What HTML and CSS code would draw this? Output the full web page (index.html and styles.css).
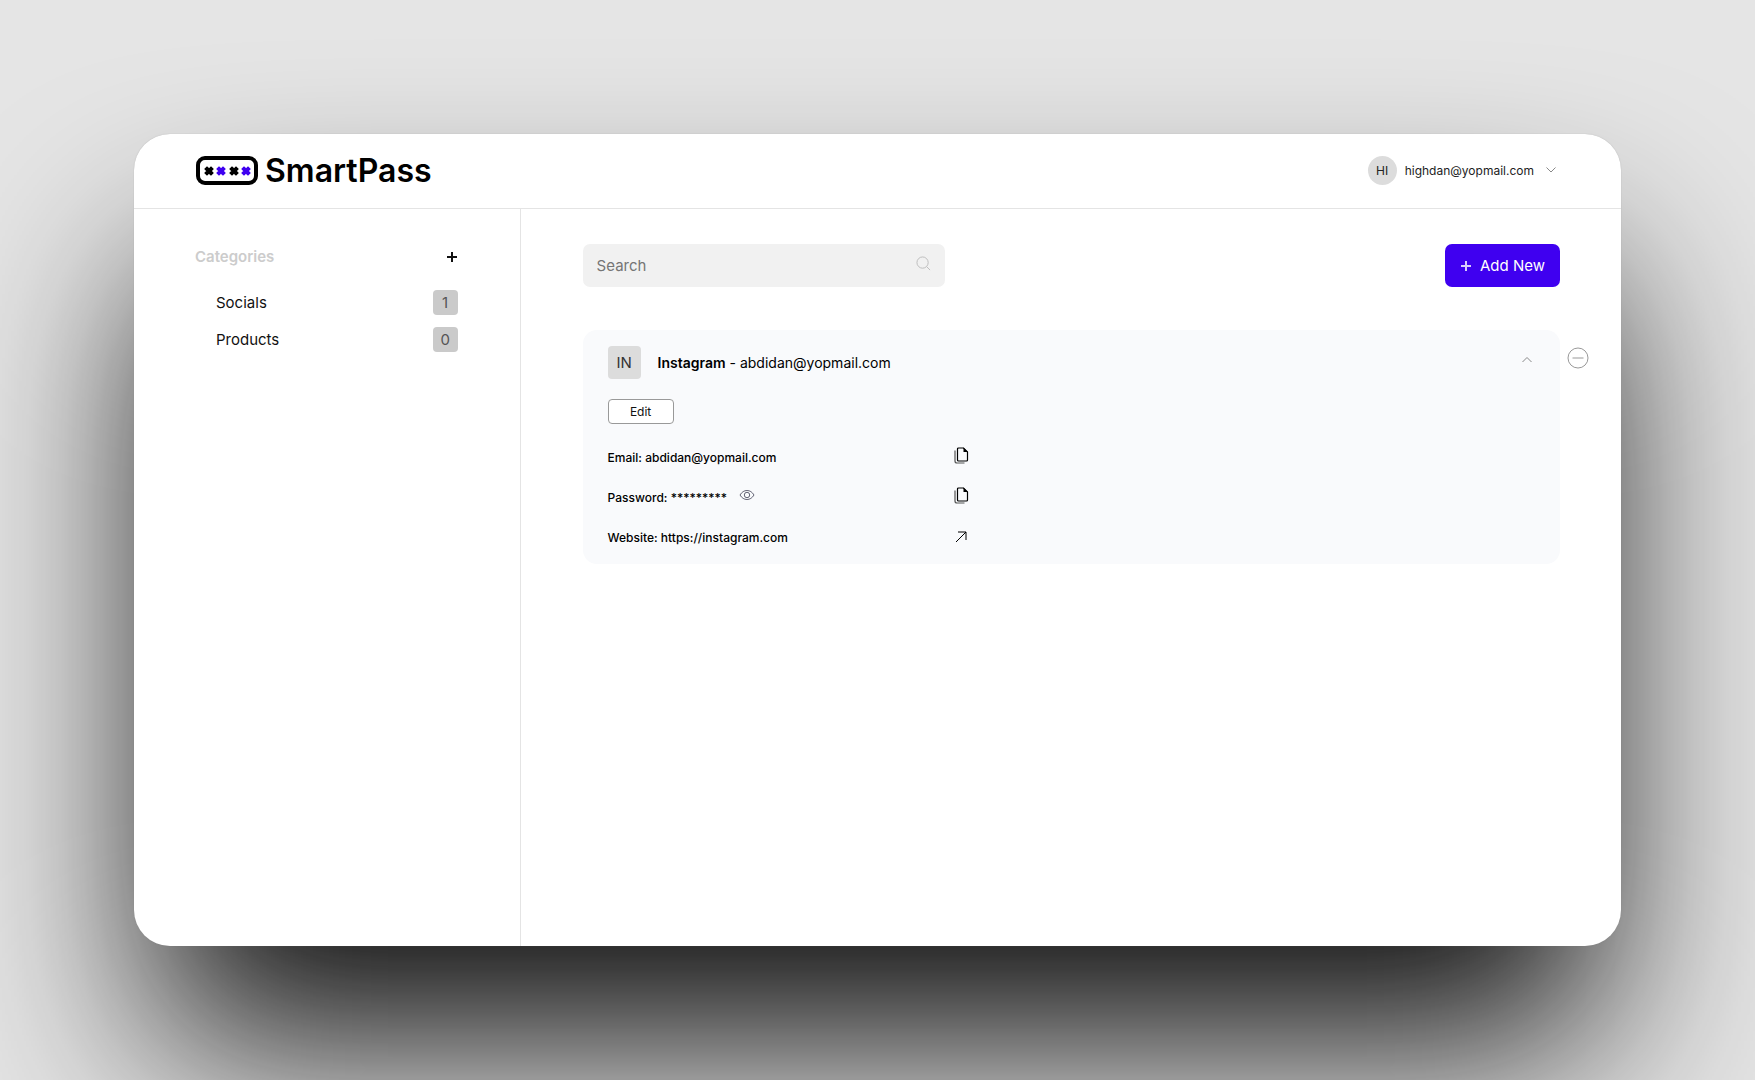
FILE: index.html
```
<!DOCTYPE html>
<html lang="en">
<head>
  <meta charset="UTF-8" />
  <meta name="viewport" content="width=device-width, initial-scale=1.0"/>
  <title>SmartPass</title>
  <link rel="stylesheet" href="styles.css">
</head>
<body>

  <!-- icons used more than once -->
  <svg class="sprite" aria-hidden="true">
    <symbol id="cross" viewBox="0 0 10 10">
      <path d="M3 3L7 7M7 3L3 7" fill="none" stroke="currentColor" stroke-width="4" stroke-linecap="square"/>
    </symbol>
    <symbol id="copy" viewBox="0 0 15 17">
      <path d="M4.500 1h5L13.500 5v8a1 1 0 0 1-1 1h-8a1 1 0 0 1-1-1V2a1 1 0 0 1 1-1z" fill="none" stroke="currentColor" stroke-width="1.200"/>
      <path d="M9.500 .5L14 5H9.500z" fill="currentColor" stroke="none"/>
      <path d="M1 3.500V14a2 2 0 0 0 2 2h7.500" fill="none" stroke="#555" stroke-width="1.200"/>
    </symbol>
  </svg>

  <div class="app">
    <header class="header">
      <a href="#" class="logo" aria-label="SmartPass">
        <svg class="logo-mark" viewBox="0 0 62 30" aria-hidden="true">
          <rect x="2" y="2" width="58" height="25" rx="7" fill="none" stroke="#000" stroke-width="4"/>
          <use href="#cross" x="8" y="10" width="10" height="10" color="#000"/>
          <use href="#cross" x="20" y="10" width="10" height="10" color="#3f00f0"/>
          <use href="#cross" x="33" y="10" width="10" height="10" color="#000"/>
          <use href="#cross" x="45" y="10" width="10" height="10" color="#3f00f0"/>
        </svg>
        <span class="logo-text">SmartPass</span>
      </a>
      <button class="user">
        <span class="avatar">HI</span>
        <span>highdan@yopmail.com</span>
        <svg class="chevron" viewBox="0 0 12 8" aria-hidden="true"><path d="M1.500 1.500L6 6l4.500-4.500"/></svg>
      </button>
    </header>

    <div class="body">
      <aside class="sidebar">
        <div class="sidebar-head">
          <h2>Categories</h2>
          <button class="icon-btn" aria-label="Add category">
            <svg class="plus" viewBox="0 0 12 12" aria-hidden="true"><path d="M6 1v10M1 6h10"/></svg>
          </button>
        </div>
        <ul class="categories">
          <li><a href="#">Socials <span class="count">1</span></a></li>
          <li><a href="#">Products <span class="count">0</span></a></li>
        </ul>
      </aside>

      <main class="main">
        <div class="toolbar">
          <label class="search">
            <input type="text" placeholder="Search" aria-label="Search">
            <svg class="search-icon" viewBox="0 0 16 16" aria-hidden="true"><circle cx="7" cy="7" r="6"/><path d="M11.500 11.500L15 15"/></svg>
          </label>
          <button class="add-btn">
            <svg class="plus" viewBox="0 0 12 12" aria-hidden="true"><path d="M6 1v10M1 6h10"/></svg>
            Add New
          </button>
        </div>

        <div class="entry">
          <section class="card">
            <div class="card-head">
              <span class="tile">IN</span>
              <p><strong>Instagram</strong> - abdidan@yopmail.com</p>
              <button class="icon-btn collapse" aria-label="Collapse">
                <svg class="chevron" viewBox="0 0 12 8" aria-hidden="true"><path d="M1.500 6L6 1.500 10.500 6"/></svg>
              </button>
            </div>
            <button class="edit-btn">Edit</button>
            <div class="fields">
              <div class="field">
                <span>Email: abdidan@yopmail.com</span>
                <button class="icon-btn" aria-label="Copy email"><svg class="copy"><use href="#copy"/></svg></button>
              </div>
              <div class="field">
                <span>Password: *********</span>
                <button class="icon-btn show" aria-label="Show password">
                  <svg class="eye" viewBox="0 0 16 12" aria-hidden="true"><path d="M1 6c1.800-3 4.200-4.500 7-4.500S13.200 3 15 6c-1.800 3-4.200 4.500-7 4.500S2.800 9 1 6z"/><circle cx="8" cy="6" r="2.700"/></svg>
                </button>
                <button class="icon-btn" aria-label="Copy password"><svg class="copy"><use href="#copy"/></svg></button>
              </div>
              <div class="field">
                <span>Website: https://instagram.com</span>
                <a class="icon-btn" href="https://instagram.com" aria-label="Open website">
                  <svg class="arrow" viewBox="0 0 12 12" aria-hidden="true"><path d="M1 11L11 1M3 1h8v8"/></svg>
                </a>
              </div>
            </div>
          </section>
          <button class="icon-btn remove" aria-label="Remove">
            <svg viewBox="0 0 22 22" aria-hidden="true"><circle cx="11" cy="11" r="10"/><path d="M5.500 11h11"/></svg>
          </button>
        </div>
      </main>
    </div>
  </div>

</body>
</html>
```
FILE: styles.css
```
* {
  box-sizing: border-box;
}
body {
  margin: 0;
  height: 100vh;
  padding: 134px;
  display: flex;
  background: #e5e5e5;
  font-family: Inter, "Liberation Sans", sans-serif;
  font-size: 15px;
  color: #111;
  overflow: hidden;
}
button, input {
  font: inherit;
  color: inherit;
}
button {
  cursor: pointer;
}
a {
  color: inherit;
  text-decoration: none;
}
svg {
  display: block;
  fill: none;
  stroke: currentColor;
}
.sprite {
  position: absolute;
  width: 0;
  height: 0;
}
.app {
  flex: 1;
  display: flex;
  flex-direction: column;
  overflow: hidden;
  background: #fff;
  border-radius: 36px;
  box-shadow: 0 0 1px rgba(128, 128, 128, 0.6), 0 118px 196px -22px rgba(0, 0, 0, 0.95);
}
.header {
  display: flex;
  justify-content: space-between;
  align-items: center;
  height: 75px;
  padding: 0 62px;
  border-bottom: 1px solid #e4e4e4;
}
.logo {
  display: flex;
  align-items: center;
  gap: 7px;
}
.logo-mark {
  width: 62px;
  height: 30px;
  stroke: none;
}
.logo-text {
  font-size: 32px;
  font-weight: 600;
  line-height: 40px;
  color: #000;
}
.user {
  display: flex;
  align-items: center;
  gap: 8px;
  padding: 0 0 2px;
  border: 0;
  background: none;
  font-size: 12px;
  color: #222;
}
.user .chevron {
  margin: 0 2px 0 3px;
}
.avatar {
  display: grid;
  place-items: center;
  width: 29px;
  height: 29px;
  border-radius: 50%;
  background: #dcdcdc;
}
.chevron {
  width: 12px;
  height: 8px;
  color: #888;
}
.body {
  flex: 1;
  display: flex;
}
.sidebar {
  width: 26%;
  padding: 36px 62px 0 61px;
  border-right: 1px solid #e4e4e4;
}
.sidebar-head {
  display: flex;
  justify-content: space-between;
  align-items: center;
}
.sidebar h2 {
  margin: 0;
  font-size: 15px;
  font-weight: 600;
  line-height: 24px;
  color: #ccc;
}
.icon-btn {
  display: grid;
  place-items: center;
  padding: 0;
  border: 0;
  background: none;
}
.plus {
  width: 12px;
  height: 12px;
  stroke-width: 2;
}
.categories {
  list-style: none;
  margin: 21px 0 0;
  padding: 0 0 0 21px;
}
.categories a {
  display: flex;
  justify-content: space-between;
  align-items: center;
  margin-bottom: 12px;
}
.count {
  display: grid;
  place-items: center;
  width: 25px;
  height: 25px;
  border-radius: 4px;
  background: #cacaca;
  color: #555;
}
.main {
  flex: 1;
  padding: 35px 32px 0 62px;
}
.toolbar {
  display: flex;
  justify-content: space-between;
  padding-right: 29px;
}
.search {
  display: flex;
  align-items: center;
  width: 362px;
  height: 43px;
  padding: 0 14px;
  border-radius: 7px;
  background: #f1f1f1;
}
.search input {
  flex: 1;
  min-width: 0;
  padding: 0;
  border: 0;
  outline: 0;
  background: none;
}
.search input::placeholder {
  color: #757575;
}
.search-icon {
  width: 15px;
  height: 15px;
  margin-bottom: 4px;
  color: #bbb;
}
.add-btn {
  display: flex;
  align-items: center;
  gap: 8px;
  height: 43px;
  padding: 0 15px;
  border: 0;
  border-radius: 7px;
  background: #3f00f0;
  color: #fff;
}
.add-btn .plus {
  opacity: 0.8;
}
.entry {
  display: flex;
  gap: 7px;
  margin-top: 43px;
}
.card {
  flex: 1;
  padding: 16px 25px 7px;
  border-radius: 14px;
  background: #f9fafc;
}
.card-head {
  display: flex;
  align-items: center;
}
.card-head p {
  flex: 1;
  margin: 0 17px;
  font-size: 14px;
  color: #000;
}
.card-head strong {
  font-weight: 600;
}
.tile {
  display: grid;
  place-items: center;
  width: 33px;
  height: 33px;
  border-radius: 4px;
  background: #dcdcdc;
  color: #333;
}
.collapse {
  margin: 0 2px 5px 0;
}
.edit-btn {
  width: 66px;
  height: 25px;
  margin: 20px 0 13px;
  padding: 0;
  border: 1px solid #999;
  border-radius: 4px;
  background: #fff;
  font-size: 12px;
}
.fields {
  width: 362px;
}
.field {
  display: flex;
  align-items: center;
  height: 40px;
  font-size: 12px;
  font-weight: 500;
  color: #000;
}
.field .icon-btn:last-child {
  width: 17px;
  margin-left: auto;
}
.show {
  margin: 0 0 5px 12px;
  color: #667;
}
.copy {
  width: 15px;
  height: 17px;
  margin-bottom: 4px;
}
.eye {
  width: 16px;
  height: 12px;
}
.arrow {
  width: 12px;
  height: 12px;
}
.remove {
  align-self: flex-start;
  margin-top: 17px;
  color: #999;
}
.remove svg {
  width: 22px;
  height: 22px;
}
```
